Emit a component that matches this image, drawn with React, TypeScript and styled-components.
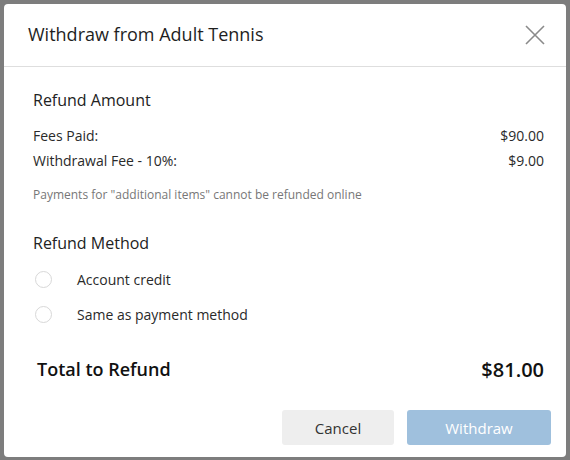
import React from 'react';
import styled, { createGlobalStyle } from 'styled-components';

const GlobalStyle = createGlobalStyle`
  html, body {
    margin: 0;
    padding: 0;
    background: #7d7d7d;
  }
  body {
    font-family: 'Open Sans', 'Noto Sans', sans-serif;
    color: #222;
  }
`;

const Overlay = styled.div`
  width: 570px;
  height: 460px;
  padding: 4px 4px 3px 4px;
  box-sizing: border-box;
`;

const Modal = styled.div`
  height: 100%;
  background: #fff;
  border-radius: 4px;
  display: flex;
  flex-direction: column;
`;

const Header = styled.div`
  height: 62px;
  display: flex;
  align-items: center;
  justify-content: space-between;
  padding: 0 21px 0 24px;
  border-bottom: 1px solid #dedede;
`;

const Title = styled.h2`
  margin: 0;
  font-size: 18px;
  font-weight: 400;
  color: #1e1e1e;
  padding-bottom: 2px;
`;

const CloseButton = styled.button`
  border: none;
  background: none;
  padding: 0;
  width: 20px;
  height: 20px;
  cursor: pointer;
  display: flex;
  align-items: center;
  justify-content: center;
`;

const Body = styled.div`
  padding: 21px 22px 0 29px;
  flex: 1;
  display: flex;
  flex-direction: column;
`;

const SectionTitle = styled.h3`
  margin: 0;
  font-size: 16px;
  font-weight: 400;
  line-height: 24px;
  color: #222;
`;

const FeeList = styled.div`
  margin-top: 11px;
`;

const FeeRow = styled.div`
  display: flex;
  justify-content: space-between;
  font-size: 14px;
  line-height: 25px;
  color: #2a2a2a;
`;

const Note = styled.p`
  margin: 14px 0 0;
  font-size: 12px;
  line-height: 16px;
  color: #777;
`;

const MethodTitle = styled(SectionTitle)`
  margin-top: 28px;
`;

const RadioList = styled.div`
  margin-top: 7px;
  display: flex;
  flex-direction: column;
`;

const RadioRow = styled.label`
  display: flex;
  align-items: center;
  height: 35px;
  font-size: 14px;
  color: #2a2a2a;
  cursor: pointer;
`;

const RadioCircle = styled.span`
  width: 15px;
  height: 15px;
  margin-left: 2px;
  margin-right: 25px;
  border: 1px solid #d8d8d8;
  border-radius: 50%;
  background: #fff;
`;

const TotalRow = styled.div`
  margin-top: 22px;
  display: flex;
  justify-content: space-between;
  align-items: center;
  padding-left: 4px;
  height: 30px;
`;

const TotalLabel = styled.span`
  font-size: 18px;
  font-weight: 600;
  color: #111;
`;

const TotalValue = styled.span`
  font-size: 20px;
  font-weight: 600;
  color: #111;
`;

const Footer = styled.div`
  display: flex;
  justify-content: flex-end;
  gap: 13px;
  padding: 0 15px 12px 0;
`;

const Button = styled.button<{ $primary?: boolean }>`
  height: 35px;
  width: ${p => (p.$primary ? '144px' : '112px')};
  border: none;
  border-radius: 3px;
  font-family: 'Open Sans', 'Noto Sans', sans-serif;
  font-size: 15px;
  cursor: pointer;
  background: ${p => (p.$primary ? '#9fc0dd' : '#eeeeee')};
  color: ${p => (p.$primary ? '#fff' : '#333')};
`;

const FEES = [
  { label: 'Fees Paid:', value: '$90.00' },
  { label: 'Withdrawal Fee - 10%:', value: '$9.00' },
];

const METHODS = ['Account credit', 'Same as payment method'];

export default function App() {
  return (
    <>
      <GlobalStyle />
      <Overlay>
        <Modal>
          <Header>
            <Title>Withdraw from Adult Tennis</Title>
            <CloseButton aria-label="Close">
              <svg width="20" height="20" viewBox="0 0 20 20">
                <path d="M1 1 L19 19 M19 1 L1 19" stroke="#8a8a8a" strokeWidth="1.6" fill="none" />
              </svg>
            </CloseButton>
          </Header>
          <Body>
            <SectionTitle>Refund Amount</SectionTitle>
            <FeeList>
              {FEES.map(fee => (
                <FeeRow key={fee.label}>
                  <span>{fee.label}</span>
                  <span>{fee.value}</span>
                </FeeRow>
              ))}
            </FeeList>
            <Note>Payments for "additional items" cannot be refunded online</Note>
            <MethodTitle>Refund Method</MethodTitle>
            <RadioList>
              {METHODS.map(method => (
                <RadioRow key={method}>
                  <RadioCircle />
                  {method}
                </RadioRow>
              ))}
            </RadioList>
            <TotalRow>
              <TotalLabel>Total to Refund</TotalLabel>
              <TotalValue>$81.00</TotalValue>
            </TotalRow>
          </Body>
          <Footer>
            <Button>Cancel</Button>
            <Button $primary>Withdraw</Button>
          </Footer>
        </Modal>
      </Overlay>
    </>
  );
}
